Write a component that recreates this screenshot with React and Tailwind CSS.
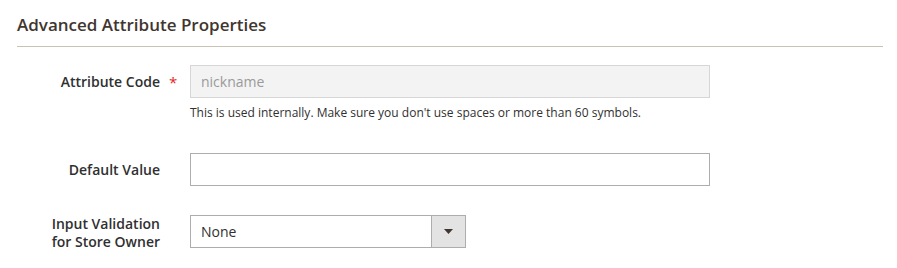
const font = { fontFamily: '"Open Sans", "Liberation Sans", sans-serif' };

const Row = ({ label, required, children, multiline }) => (
  <div className="flex items-start">
    <div
      className={`w-[160px] shrink-0 text-right text-[14px] leading-[18px] font-semibold text-[#303030] ${
        multiline ? "pt-0" : "pt-[8px]"
      }`}
    >
      {label}
    </div>
    <div className="w-[30px] shrink-0 pt-[8px] pl-[9px] text-[15px] leading-[18px] text-[#e22626]">
      {required ? "*" : ""}
    </div>
    <div className="flex-1">{children}</div>
  </div>
);

export default function App() {
  return (
    <div className="w-[897px] h-[268px] bg-white overflow-hidden" style={font}>
      <div className="mx-[17px] w-[866px] border-b border-[#cac3b4] pt-[13px] pb-[9px]">
        <h2 className="text-[17px] leading-[24px] font-semibold text-[#41362f]">
          Advanced Attribute Properties
        </h2>
      </div>

      <div className="mt-[18px] flex flex-col">
        <Row label="Attribute Code" required>
          <input
            disabled
            value="nickname"
            readOnly
            className="block w-[520px] h-[33px] px-[10px] text-[14px] bg-[#f3f3f3] border border-[#d6d6d6] text-[#9a9a9a] outline-none"
          />
          <div className="mt-[6px] text-[12px] leading-[17px] text-[#303030]">
            This is used internally. Make sure you don't use spaces or more than 60 symbols.
          </div>
        </Row>

        <div className="mt-[32px]">
          <Row label="Default Value">
            <input className="block w-[520px] h-[33px] px-[10px] text-[14px] bg-white border border-[#adadad] text-[#303030] outline-none" />
          </Row>
        </div>

        <div className="mt-[29px]">
          <Row label={<>Input Validation<br />for Store Owner</>} multiline>
            <div className="flex w-[276px] h-[33px] border border-[#adadad] bg-white">
              <div className="flex-1 flex items-center px-[10px] text-[14px] text-[#303030]">None</div>
              <div className="w-[34px] flex items-center justify-center bg-[#e3e3e3] border-l border-[#adadad]">
                <svg width="9" height="5" viewBox="0 0 9 5">
                  <path d="M0 0H9L4.5 5Z" fill="#41362f" />
                </svg>
              </div>
            </div>
          </Row>
        </div>
      </div>
    </div>
  );
}
